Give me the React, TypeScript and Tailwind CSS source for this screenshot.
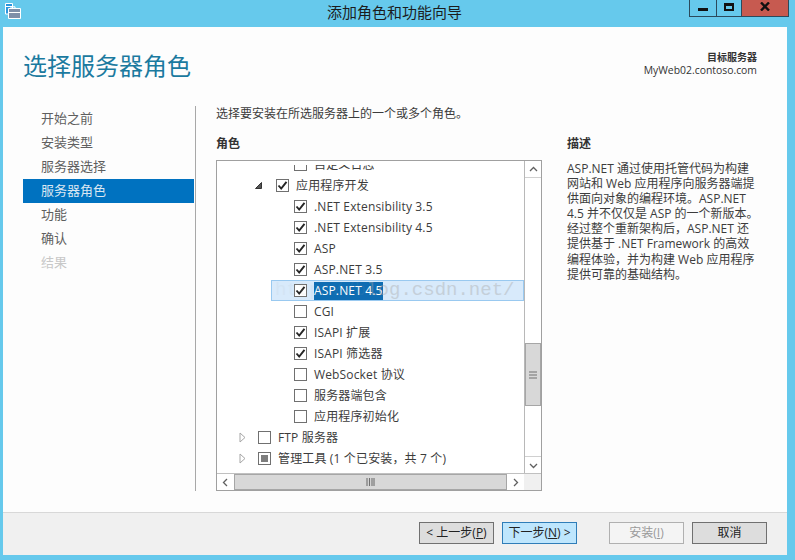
import React from 'react'

const FONT = '"Open Sans", "Noto Sans CJK SC", sans-serif'

const navItems = [
  { label: '开始之前' },
  { label: '安装类型' },
  { label: '服务器选择' },
  { label: '服务器角色', active: true },
  { label: '功能' },
  { label: '确认' },
  { label: '结果', disabled: true },
]

const description = [
  'ASP.NET 通过使用托管代码为构建',
  '网站和 Web 应用程序向服务器端提',
  '供面向对象的编程环境。ASP.NET',
  '4.5 并不仅仅是 ASP 的一个新版本。',
  '经过整个重新架构后，ASP.NET 还',
  '提供基于 .NET Framework 的高效',
  '编程体验，并为构建 Web 应用程序',
  '提供可靠的基础结构。',
]

type CheckState = 'on' | 'off' | 'partial'

interface RowProps {
  label: string
  state: CheckState
  level: 0 | 1 | 2
  arrow?: 'open' | 'closed'
  selected?: boolean
}

const rows: RowProps[] = [
  { label: '自定义日志', state: 'off', level: 2 },
  { label: '应用程序开发', state: 'on', level: 1, arrow: 'open' },
  { label: '.NET Extensibility 3.5', state: 'on', level: 2 },
  { label: '.NET Extensibility 4.5', state: 'on', level: 2 },
  { label: 'ASP', state: 'on', level: 2 },
  { label: 'ASP.NET 3.5', state: 'on', level: 2 },
  { label: 'ASP.NET 4.5', state: 'on', level: 2, selected: true },
  { label: 'CGI', state: 'off', level: 2 },
  { label: 'ISAPI 扩展', state: 'on', level: 2 },
  { label: 'ISAPI 筛选器', state: 'on', level: 2 },
  { label: 'WebSocket 协议', state: 'off', level: 2 },
  { label: '服务器端包含', state: 'off', level: 2 },
  { label: '应用程序初始化', state: 'off', level: 2 },
  { label: 'FTP 服务器', state: 'off', level: 0, arrow: 'closed' },
  { label: '管理工具 (1 个已安装，共 7 个)', state: 'partial', level: 0, arrow: 'closed' },
]

const Checkbox = ({ state }: { state: CheckState }) => (
  <span className="flex h-[13px] w-[13px] shrink-0 items-center justify-center border border-[#707070] bg-white">
    {state === 'on' && (
      <svg width="11" height="11" viewBox="0 0 11 11">
        <path d="M1.5 5.5 L4.2 8.6 L9.5 1.8" fill="none" stroke="#262626" strokeWidth="1.9" />
      </svg>
    )}
    {state === 'partial' && <span className="h-[7px] w-[7px] bg-[#7d7d7d]" />}
  </span>
)

const Arrow = ({ kind }: { kind: 'open' | 'closed' }) =>
  kind === 'open' ? (
    <svg width="7" height="7" viewBox="0 0 7 7">
      <path d="M6.5 0.5 V6.5 H0.5 Z" fill="#555" stroke="#333" strokeWidth="1" />
    </svg>
  ) : (
    <svg width="7" height="11" viewBox="0 0 7 11">
      <path d="M1 1 L6 5.5 L1 10 Z" fill="#fff" stroke="#a6a6a6" strokeWidth="1" />
    </svg>
  )

const TreeRow = ({ label, state, level, arrow, selected }: RowProps) => {
  if (selected) {
    return (
      <div className="relative ml-[54px] flex h-[21px] shrink-0 items-center border border-[#99c9f0] bg-[#d8eafb] pl-[22px]">
        <Checkbox state={state} />
        <span className="ml-[7px] bg-[#0f6db3] leading-[18px] tracking-[0.15px] text-white">{label}</span>
        {/* blog watermark baked into the screenshot */}
        <span className="absolute top-[-3px] left-[3px] font-['Liberation_Mono'] text-[19px] leading-[24px] whitespace-nowrap text-[#a8a8a8] opacity-40">
          <span className="opacity-20">http://b</span>log.csdn.net/
        </span>
      </div>
    )
  }
  return (
    <div
      className={
        level === 2
          ? 'flex h-[21px] shrink-0 items-center pl-[77px]'
          : level === 1
            ? 'flex h-[21px] shrink-0 items-center pl-[38px]'
            : 'flex h-[21px] shrink-0 items-center pl-[22px]'
      }
    >
      {arrow && (
        <span className={level === 1 ? 'flex w-[21px] items-center' : 'flex w-[19px] items-center'}>
          <Arrow kind={arrow} />
        </span>
      )}
      <Checkbox state={state} />
      <span className="ml-[7px] tracking-[0.15px] whitespace-nowrap">{label}</span>
    </div>
  )
}

const ScrollButton = ({ d, className }: { d: string; className: string }) => (
  <div className={className}>
    <svg width="9" height="9" viewBox="0 0 9 9">
      <path d={d} fill="none" stroke="#606060" strokeWidth="1.3" />
    </svg>
  </div>
)

const WizardButton = ({
  children,
  variant,
}: {
  children: React.ReactNode
  variant: 'default' | 'primary' | 'disabled'
}) => {
  const look =
    variant === 'primary'
      ? 'border-[#2f7db8] bg-[#bee6fd] text-[#222]'
      : variant === 'disabled'
        ? 'border-[#b0b0b0] bg-[#f4f4f4] text-[#9a9a9a]'
        : 'border-[#707070] bg-[#dddddd] text-[#222]'
  return (
    <div className={`flex h-[22px] w-[75px] items-center justify-center border text-[12px] ${look}`}>
      {children}
    </div>
  )
}

export default function App() {
  return (
    <div
      className="flex h-[560px] w-[795px] flex-col overflow-hidden bg-[#66c9ec] text-[12px] text-[#3c3c3c]"
      style={{ fontFamily: FONT }}
    >
      {/* title bar */}
      <div className="relative flex h-[27px] shrink-0 items-start justify-center">
        <svg className="absolute top-[3px] left-[5px]" width="16" height="16" viewBox="0 0 16 16">
          <path d="M0.5 0.5 H7.5 V11 H0.5 Z" fill="#2a96de" stroke="#fff" strokeWidth="1" />
          <path d="M0.5 3.5 H7.5" stroke="#fff" strokeWidth="1" />
          <path d="M6 5 V3.8 H10 V5 M3.5 5.5 H15.5 V15.5 H3.5 Z" fill="none" stroke="#fff" strokeWidth="1" />
          <path d="M4 6 H15 V15 H4 Z" fill="#7f8fa8" />
          <path d="M4 9.5 H15" stroke="#fff" strokeWidth="1" />
        </svg>
        <span className="mt-[2px] pr-[6px] text-[15px] leading-[20px] text-[#1c1c1c]">添加角色和功能向导</span>
        <div className="absolute top-0 right-[6px] flex h-[17px] border-x border-b border-[#2b4a5c]">
          <div className="flex w-[27px] items-end justify-center border-r border-[#2b4a5c] pb-[5px]">
            <span className="h-[3px] w-[10px] bg-[#111]" />
          </div>
          <div className="flex w-[25px] items-start justify-center border-r border-[#2b4a5c] pt-[3px]">
            <span className="h-[8px] w-[10px] border-2 border-t-[3px] border-[#111]" />
          </div>
          <div className="flex w-[46px] items-start justify-center bg-[#c75a50] pt-[2px]">
            <svg width="10" height="9" viewBox="0 0 10 9">
              <path d="M1 0.5 L9 8.5 M9 0.5 L1 8.5" stroke="#111" strokeWidth="2.4" />
            </svg>
          </div>
        </div>
      </div>

      {/* window body */}
      <div className="mr-[8px] mb-[5px] ml-[3px] flex min-h-0 flex-1 flex-col bg-[#fdfdfd]">
        <div className="flex h-[79px] shrink-0 items-start justify-between pr-[30px] pl-[20px]">
          <h1 className="mt-[21px] text-[24px] leading-[36px] font-normal text-[#1b7a9f]">选择服务器角色</h1>
          <div className="mt-[24px] text-right text-[10.4px] leading-[13px] text-[#333]">
            <div className="text-[10px] font-bold">目标服务器</div>
            <div>MyWeb02.contoso.com</div>
          </div>
        </div>

        <div className="flex min-h-0 flex-1">
          {/* steps */}
          <div className="mb-[21px] ml-[20px] w-[173px] shrink-0 border-r border-[#a8a8a8] pt-px pr-px">
            {navItems.map((item) => (
              <div
                key={item.label}
                className={
                  item.active
                    ? 'flex h-[24px] items-center bg-[#0072c0] pl-[18px] text-[13px] text-[#dbe7f2]'
                    : item.disabled
                      ? 'flex h-[24px] items-center pl-[18px] text-[13px] text-[#c8c8c8]'
                      : 'flex h-[24px] items-center pl-[18px] text-[13px] text-[#5f5f5f]'
                }
              >
                {item.label}
              </div>
            ))}
          </div>

          {/* main pane */}
          <div className="mb-[21px] ml-[20px] flex min-w-0 flex-1 flex-col">
            <p className="h-[30px] shrink-0 leading-[15px]">选择要安装在所选服务器上的一个或多个角色。</p>
            <div className="flex min-h-0 flex-1">
              <div className="flex w-[326px] shrink-0 flex-col">
                <div className="h-[24px] shrink-0 leading-[15px] font-bold text-[#333]">角色</div>
                <div className="flex min-h-0 flex-1 flex-col border border-[#a0a0a0] bg-white">
                  <div className="flex min-h-0 flex-1">
                    <div className="flex min-w-0 flex-1 flex-col pt-[4px]">
                      <div className="min-h-0 flex-1 overflow-hidden">
                        <div className="mt-[-11px] flex flex-col">
                          {rows.map((row) => (
                            <TreeRow key={row.label} {...row} />
                          ))}
                        </div>
                      </div>
                    </div>
                    <div className="flex w-[17px] shrink-0 flex-col border-l border-[#b8b8b8]">
                      <ScrollButton
                        d="M1 6 L4.5 2.5 L8 6"
                        className="flex h-[17px] shrink-0 items-center justify-center border-b border-[#d0d0d0]"
                      />
                      <div className="h-[165px] shrink-0" />
                      <div className="flex h-[63px] shrink-0 items-center justify-center border border-[#a6a6a6] bg-[#d8d8d8]">
                        <svg width="8" height="8" viewBox="0 0 8 8">
                          <path d="M0 1 H8 M0 4 H8 M0 7 H8" stroke="#707070" strokeWidth="1.2" />
                        </svg>
                      </div>
                      <div className="flex-1" />
                      <ScrollButton
                        d="M1 3 L4.5 6.5 L8 3"
                        className="flex h-[17px] shrink-0 items-center justify-center border-t border-[#d0d0d0]"
                      />
                    </div>
                  </div>
                  <div className="flex h-[17px] shrink-0 border-t border-[#c0c0c0]">
                    <ScrollButton
                      d="M6 1 L2.5 4.5 L6 8"
                      className="flex w-[17px] shrink-0 items-center justify-center"
                    />
                    <div className="flex w-[273px] shrink-0 items-center justify-center border border-[#a6a6a6] bg-[#d8d8d8]">
                      <svg width="9" height="8" viewBox="0 0 9 8">
                        <path d="M1 0 V8 M3.5 0 V8 M6 0 V8 M8 0 V8" stroke="#707070" strokeWidth="1.1" />
                      </svg>
                    </div>
                    <ScrollButton
                      d="M3 1 L6.5 4.5 L3 8"
                      className="flex w-[17px] shrink-0 items-center justify-center"
                    />
                    <div className="flex-1 bg-[#f0f0f0]" />
                  </div>
                </div>
              </div>

              <div className="ml-[25px] min-w-0 flex-1 whitespace-nowrap">
                <div className="h-[25px] leading-[15px] font-bold text-[#333]">描述</div>
                {description.map((line) => (
                  <div key={line} className="h-[15.1px] leading-[15px]">
                    {line}
                  </div>
                ))}
              </div>
            </div>
          </div>
        </div>

        {/* footer */}
        <div className="flex h-[43px] shrink-0 items-start border-t border-[#d8d8d8] bg-[#f0f0f0] pt-[9px] pl-[416px]">
          <WizardButton variant="default">
            &lt; 上一步(<span className="underline">P</span>)
          </WizardButton>
          <div className="ml-[8px]">
            <WizardButton variant="primary">
              下一步(<span className="underline">N</span>) &gt;
            </WizardButton>
          </div>
          <div className="ml-[32px]">
            <WizardButton variant="disabled">
              安装(<span className="underline">I</span>)
            </WizardButton>
          </div>
          <div className="ml-[8px]">
            <WizardButton variant="default">取消</WizardButton>
          </div>
        </div>
      </div>
    </div>
  )
}
